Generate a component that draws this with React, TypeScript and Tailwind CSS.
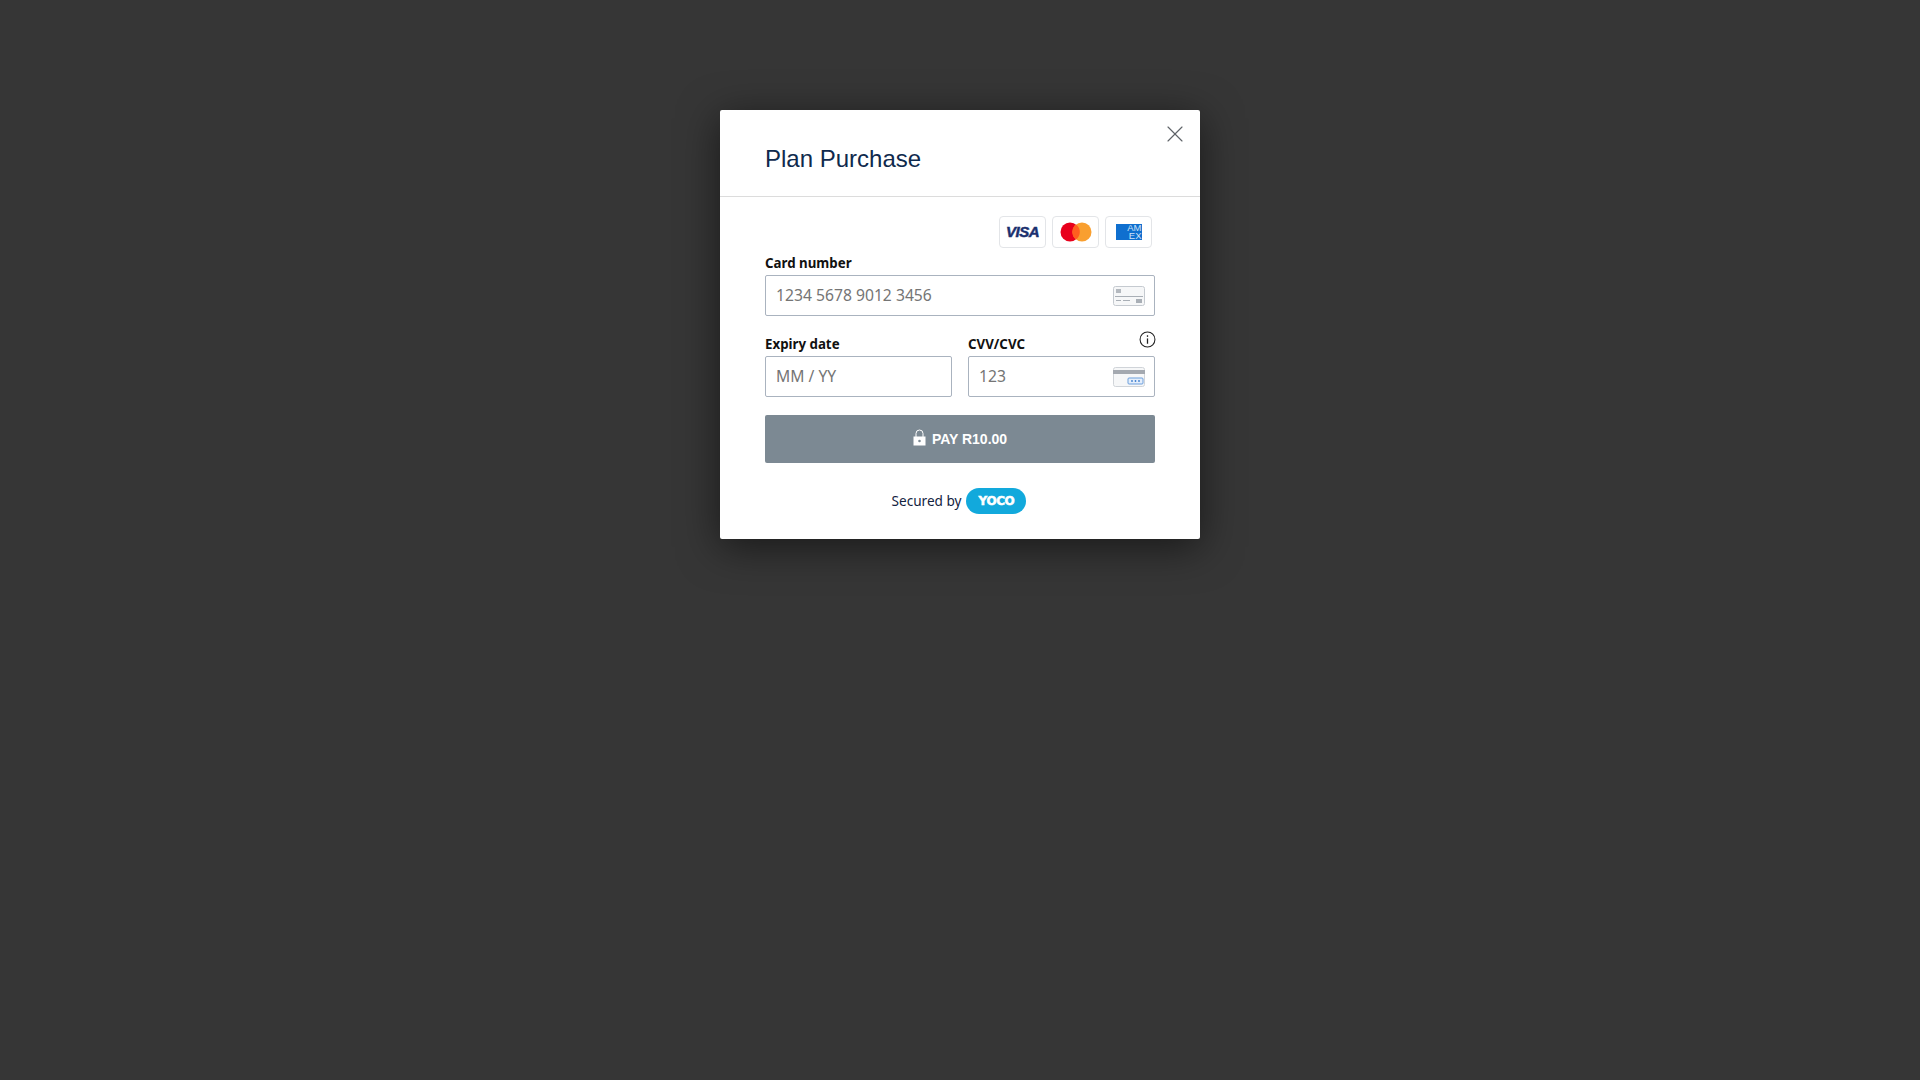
import React from "react";
import { X } from "lucide-react";

const labelFont = "font-['Noto_Sans','Open_Sans',sans-serif]";

function CardBadge({ children }: { children: React.ReactNode }) {
  return (
    <div className="flex h-[32px] w-[47px] items-center justify-center rounded-[4px] border border-[#e3e5e8] bg-white">
      {children}
    </div>
  );
}

function FrontCardIcon() {
  return (
    <svg width="32" height="20" viewBox="0 0 32 20" fill="none">
      <rect x="0.5" y="0.5" width="31" height="19" rx="2" fill="#f6f7f8" stroke="#c5cad0" />
      <rect x="3" y="3" width="5" height="4" fill="#b4b9bf" />
      <rect x="2" y="10" width="28" height="1" fill="#a9afb6" />
      <rect x="3" y="14" width="5" height="1" fill="#a9afb6" />
      <rect x="10" y="14" width="7" height="1" fill="#a9afb6" />
      <rect x="23" y="13" width="6" height="4" fill="#a9afb6" />
    </svg>
  );
}

function BackCardIcon() {
  return (
    <svg width="32" height="20" viewBox="0 0 32 20" fill="none">
      <rect x="0.5" y="0.5" width="31" height="19" rx="2" fill="#f6f7f8" stroke="#d0d4d9" />
      <rect x="0" y="3" width="32" height="4" fill="#a4a9b0" />
      <rect x="15" y="11" width="15" height="6" rx="1" fill="#e4eefb" stroke="#6c9fdc" />
      <circle cx="19" cy="14" r="0.9" fill="#3f7fd0" />
      <circle cx="22.5" cy="14" r="0.9" fill="#3f7fd0" />
      <circle cx="26" cy="14" r="0.9" fill="#3f7fd0" />
    </svg>
  );
}

function Field({
  label,
  placeholder,
  icon,
}: {
  label: string;
  placeholder: string;
  icon?: React.ReactNode;
}) {
  return (
    <div className="flex flex-1 flex-col">
      <label className={`${labelFont} h-[18px] text-[13.3px] leading-[18px] font-bold text-[#111]`}>
        {label}
      </label>
      <div className="mt-[3px] flex h-[41px] items-center rounded-[2px] border border-[#aab3bf] bg-white pr-[9px] pl-[10px]">
        <span className={`${labelFont} flex-1 text-[15.7px] text-[#757575]`}>{placeholder}</span>
        {icon}
      </div>
    </div>
  );
}

export default function App() {
  return (
    <div className="flex min-h-screen justify-center bg-[#363636] pt-[110px]">
      <div className="h-[429px] w-[480px] rounded-[2px] bg-white shadow-[0_8px_40px_rgba(0,0,0,0.55)]">
        <div className="relative flex h-[87px] items-center border-b border-[#dcdcdc] pl-[45px]">
          <h1 className="pt-[11px] font-['Liberation_Sans',sans-serif] text-[24px] text-[#0f2a4d]">
            Plan Purchase
          </h1>
          <button className="absolute top-[10px] right-[11px] text-[#5f6368]">
            <X size={28} strokeWidth={1} />
          </button>
        </div>

        <div className="px-[45px]">
          <div className="flex justify-end gap-[6px] pt-[19px] pr-[3px]">
            <CardBadge>
              <span className="font-['Liberation_Sans',sans-serif] text-[15px] font-bold tracking-[-0.5px] text-[#1a2f6e] italic [-webkit-text-stroke:0.5px_#1a2f6e]">
                VISA
              </span>
            </CardBadge>
            <CardBadge>
              <svg width="32" height="20" viewBox="0 0 32 20">
                <circle cx="10" cy="10" r="9.5" fill="#e8001c" />
                <circle cx="22" cy="10" r="9.5" fill="#f99f2f" />
                <path d="M16 2.4a9.5 9.5 0 0 1 0 15.2a9.5 9.5 0 0 1 0-15.2z" fill="#ff5f1f" />
              </svg>
            </CardBadge>
            <CardBadge>
              <div className="flex h-[16px] w-[26px] flex-col items-end justify-center bg-[#0f6fcf] font-['Liberation_Sans',sans-serif] text-[9.5px] leading-[8px] text-[#cfe3f8]">
                <span>AM</span>
                <span>EX</span>
              </div>
            </CardBadge>
          </div>

          <div className="mt-[6px]">
            <Field label="Card number" placeholder="1234 5678 9012 3456" icon={<FrontCardIcon />} />
          </div>

          <div className="relative mt-[19px] flex gap-[16px]">
            <Field label="Expiry date" placeholder="MM / YY" />
            <Field label="CVV/CVC" placeholder="123" icon={<BackCardIcon />} />
            <svg
              className="absolute top-[-4px] right-[-1px]"
              width="17"
              height="17"
              viewBox="0 0 16 16"
              fill="none"
              stroke="#222"
            >
              <circle cx="8" cy="8" r="7" />
              <path d="M8 7v5" strokeWidth="1.2" />
              <path d="M8 4v1.5" strokeWidth="1.2" />
            </svg>
          </div>

          <button className="mt-[18px] flex h-[48px] w-full items-center justify-center gap-[6px] rounded-[2px] bg-[#7c8993] font-['Liberation_Sans',sans-serif] text-[14px] font-bold text-white">
            <svg width="13" height="17" viewBox="0 0 13 17" className="mb-[3px]" fill="white">
              <path d="M3 8V4.5a3.5 3.5 0 0 1 7 0V8" fill="none" stroke="white" strokeWidth="1" />
              <path fillRule="evenodd" d="M0.5 7.5h12v9h-12zM6.5 10.7a1.3 1.3 0 1 0 0 2.6a1.3 1.3 0 0 0 0-2.6z" />
            </svg>
            <span>PAY R10.00</span>
          </button>

          <div className="mt-[25px] flex items-center justify-center gap-[5px] pr-[2px]">
            <span className={`${labelFont} text-[13.6px] text-[#12233f]`}>Secured by</span>
            <span className="flex h-[26px] w-[60px] items-center justify-center rounded-full bg-[#12a9dc] font-['DejaVu_Sans',sans-serif] text-[12px] font-bold tracking-[-0.4px] text-white [-webkit-text-stroke:0.5px_white]">
              YOCO
            </span>
          </div>
        </div>
      </div>
    </div>
  );
}
